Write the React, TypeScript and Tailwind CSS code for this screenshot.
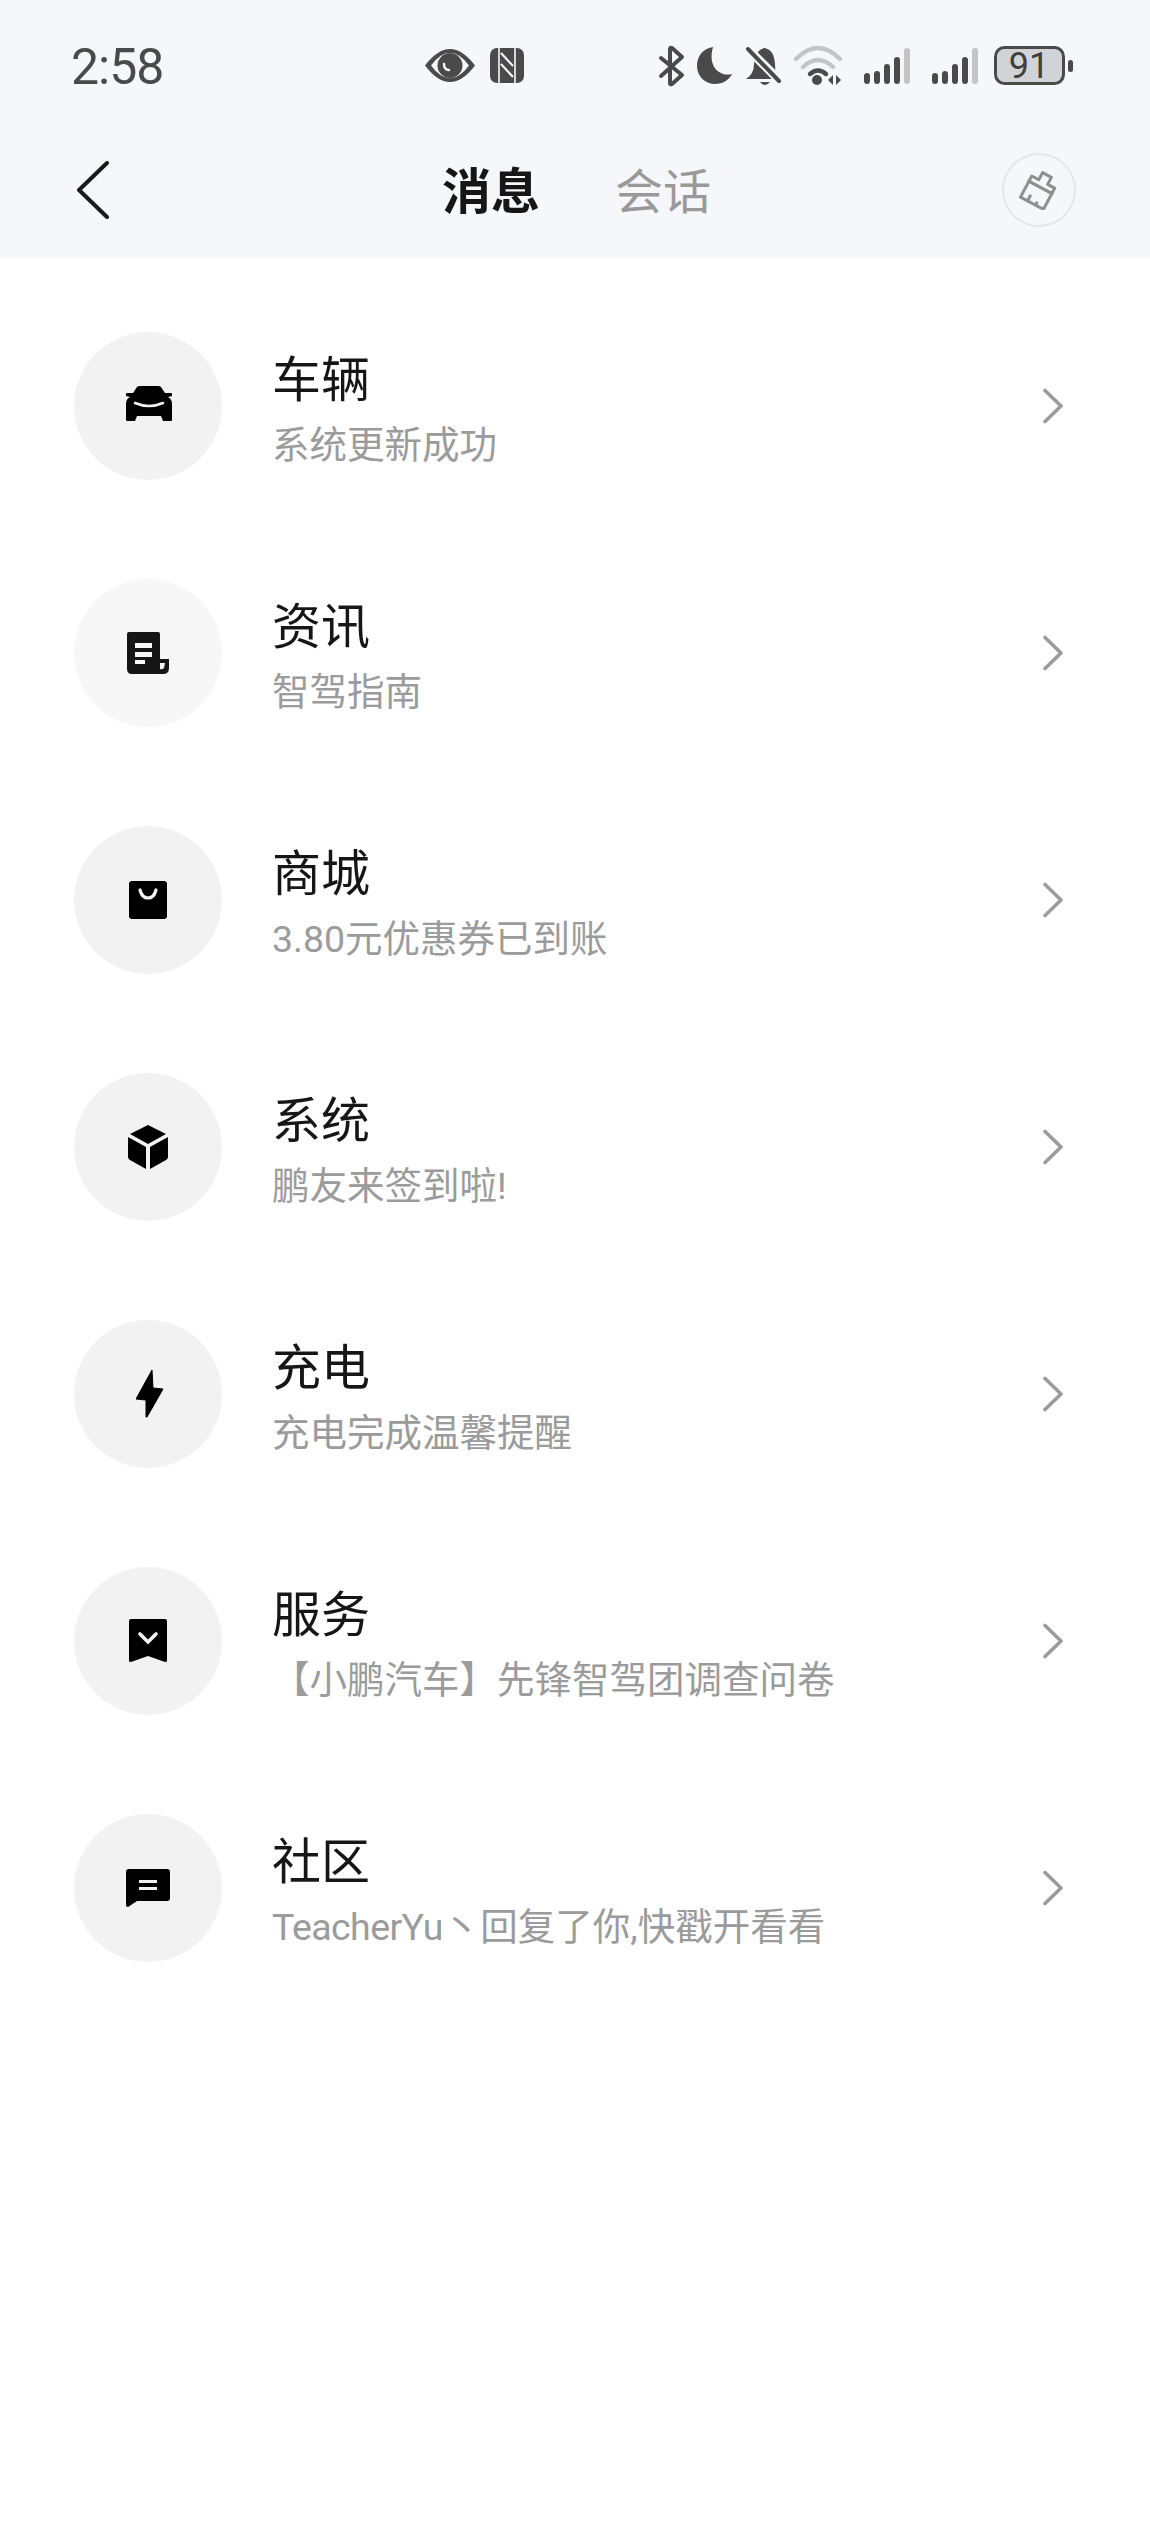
import React from "react";

const font = { fontFamily: 'Roboto, "Noto Sans CJK SC", "Noto Sans", sans-serif' };

const Chevron = () => (
  <svg width="24" height="36" viewBox="0 0 24 36" fill="none" className="shrink-0">
    <path d="M3 2.5 L19 18 L3 33.5" stroke="#9b9b9b" strokeWidth="3.6" strokeLinecap="round" strokeLinejoin="round" />
  </svg>
);

const CarIcon = () => (
  <svg width="48" height="36" viewBox="0 0 48 36" className="ml-[2px] mb-[4px]">
    <path d="M12 1 Q13 0 15 0 H33 Q35 0 36 1 L40 7 H46 Q47 7 47 8 L47 10 L43 11 Q47 13 47 18 V34 Q47 35 46 35 H38 L36 30 H12 L10 35 H2 Q1 35 1 34 V18 Q1 13 5 11 L1 10 L1 8 Q1 7 2 7 H8 Z" fill="#000" />
    <path d="M10 17 Q24 23 38 17" fill="none" stroke="#f2f2f2" strokeWidth="2.6" strokeLinecap="round" />
  </svg>
);
const DocIcon = () => (
  <svg width="44" height="42" viewBox="0 0 44 42">
    <path fillRule="evenodd" d="M3 0 H32 Q34 0 34 2 V27 H43 V36 Q43 42 37 42 H6 Q1 42 1 37 V2 Q1 0 3 0 Z M9 11 V16 H26 V11 Z M9 20 V25 H26 V20 Z M9 28 V32 H19 V28 Z M34 31 V37 Q36 38 38 36 L39 31 Z" fill="#161616" />
  </svg>
);
const BagIcon = () => (
  <svg width="38" height="38" viewBox="0 0 38 38">
    <rect width="38" height="38" rx="3" fill="#000" />
    <path d="M11 9 Q13 17 19 17 Q25 17 27 9" fill="none" stroke="#f2f2f2" strokeWidth="3.2" strokeLinecap="round" />
  </svg>
);
const CubeIcon = () => (
  <svg width="42" height="44" viewBox="0 0 42 44">
    <path d="M21 0 L39 9 L21 19 L3 9 Z M1 12 L19 22 V44 L3 35 Q1 34 1 32 Z M41 12 L23 22 V44 L39 35 Q41 34 41 32 Z" fill="#000" strokeLinejoin="round" />
  </svg>
);
const BoltIcon = () => (
  <svg width="28" height="48" viewBox="0 0 28 48" className="ml-[3px]">
    <path d="M16 0 L17 18 L27 19 L11 47 L10 47 L10 30 L0 29 Z" fill="#000" stroke="#000" strokeLinejoin="round" />
  </svg>
);
const BookmarkIcon = () => (
  <svg width="38" height="44" viewBox="0 0 38 44">
    <path d="M2 0 H36 Q38 0 38 2 V42 Q38 43 36 43 L19 37 L2 43 Q0 43 0 42 V2 Q0 0 2 0 Z" fill="#000" />
    <path d="M11 15 L19 23 L27 15" fill="none" stroke="#f2f2f2" strokeWidth="3.6" strokeLinecap="round" />
  </svg>
);
const ChatIcon = () => (
  <svg width="44" height="38" viewBox="0 0 44 38">
    <path fillRule="evenodd" d="M3 0 H41 Q44 0 44 3 V29 Q44 32 41 32 H11 L2 38 Q0 38 0 36 V3 Q0 0 3 0 Z M13 11 V14 H31 V11 Z M13 18 V21 H31 V18 Z" fill="#000" />
  </svg>
);

const rows = [
  { title: "车辆", sub: "系统更新成功", icon: <CarIcon />, bg: "bg-[#f2f2f2]" },
  { title: "资讯", sub: "智驾指南", icon: <DocIcon />, bg: "bg-[#f7f7f7]" },
  { title: "商城", sub: "3.80元优惠券已到账", icon: <BagIcon />, bg: "bg-[#f2f2f2]" },
  { title: "系统", sub: "鹏友来签到啦!", icon: <CubeIcon />, bg: "bg-[#f2f2f2]" },
  { title: "充电", sub: "充电完成温馨提醒", icon: <BoltIcon />, bg: "bg-[#f2f2f2]" },
  { title: "服务", sub: "【小鹏汽车】先锋智驾团调查问卷", icon: <BookmarkIcon />, bg: "bg-[#f2f2f2]" },
  {
    title: "社区",
    sub: (
      <>
        <span className="tracking-[-0.6px]">TeacherYu</span>丶回复了你,快戳开看看
      </>
    ),
    icon: <ChatIcon />,
    bg: "bg-[#f2f2f2]",
  },
];

const D = "#4a4a4a";
const B = "#f5f7fb";
const G = "#c4c4c6";

const Bars = ({ x }: { x: number }) => (
  <g>
    <rect x={x} y="29" width="6" height="11" rx="3" fill={D} />
    <rect x={x + 10} y="27" width="6" height="13" rx="3" fill={D} />
    <rect x={x + 20} y="20" width="6" height="20" rx="3" fill={D} />
    <rect x={x + 30} y="13" width="6" height="27" rx="3" fill={D} />
    <rect x={x + 40} y="4" width="6" height="36" rx="3" fill={G} />
  </g>
);

const StatusIcons = () => (
  <svg width="650" height="44" viewBox="0 0 650 44" className="shrink-0">
    {/* eye */}
    <path fillRule="evenodd" d="M0 21.5 Q25 -11.5 50 21.5 Q25 54.5 0 21.5 Z M6 21.5 Q25 -4 44 21.5 Q25 47 6 21.5 Z" fill={D} />
    <circle cx="25" cy="21.5" r="12.5" fill={D} />
    <path d="M19 20 Q19 26 24 26" fill="none" stroke={B} strokeWidth="2.4" strokeLinecap="round" />
    {/* NFC */}
    <rect x="65" y="4" width="34" height="35" rx="7" fill={D} />
    <path d="M74 4 V39 M90 4 V39" stroke={B} strokeWidth="1.6" />
    <path d="M76 9 L88 22 M76 20 L88 33" stroke={B} strokeWidth="2.2" />
    {/* bluetooth */}
    <path d="M236 14 L257 31 L247 40 Q245 41 245 39 V5 Q245 3 247 4 L257 13 L236 32" fill="none" stroke={D} strokeWidth="4" strokeLinecap="round" strokeLinejoin="round" />
    {/* moon */}
    <path d="M288 3 C276 5 272 14 272 22 C272 33 281 40 290 40 C298 40 304 36 307 30 C296 33 282 24 288 3 Z" fill={D} />
    {/* bell off */}
    <path d="M321 35 Q329 30 329 20 Q329 7 339 4 Q349 5 350 20 Q350 30 354 35 Z" fill={D} />
    <path d="M335 38 H345 Q340 44 335 38 Z" fill={D} />
    <path d="M321 3 L354 36" stroke={B} strokeWidth="9" />
    <path d="M323 5 L354 37" stroke={D} strokeWidth="4" strokeLinecap="round" />
    {/* wifi */}
    <path d="M371 15 Q393 -7 415 15" fill="none" stroke={G} strokeWidth="4.4" strokeLinecap="round" />
    <path d="M378 23 Q393 9 408 23" fill="none" stroke={G} strokeWidth="4.4" strokeLinecap="round" />
    <path d="M385 30 Q393 23 401 30" fill="none" stroke={D} strokeWidth="4.4" strokeLinecap="round" />
    <circle cx="392" cy="36" r="5" fill={D} />
    <path d="M408 31 L403 36 L408 41 Z M411 31 V41 L416 36 Z" fill={D} />
    <Bars x={439} />
    <Bars x={507} />
    {/* battery */}
    <rect x="570.5" y="3.5" width="68" height="36" rx="9" fill="#d2d3d7" stroke={D} strokeWidth="3" />
    <rect x="643" y="16" width="5" height="12" rx="2.5" fill={D} />
  </svg>
);

export default function App() {
  return (
    <div className="w-[1150px] h-[2527px] bg-white flex flex-col" style={font}>
      <div className="h-[258px] bg-[#f5f7fb] flex flex-col shrink-0">
        <div className="h-[132px] pl-[71px] flex items-start pt-[44px] relative">
          <span className="text-[50px] leading-[46px] tracking-[-1px] text-[#4a4a4a] w-[354px] shrink-0">2:58</span>
          <StatusIcons />
          <span className="absolute left-[999px] top-[50px] w-[60px] text-center text-[36px] leading-[32px] text-[#3f3f3f]">91</span>
        </div>
        <div className="flex-1 relative flex items-start">
          <div className="pl-[74px] pt-[29px] w-[442px] shrink-0">
            <svg width="36" height="58" viewBox="0 0 36 58" fill="none">
              <path d="M33 2 L5 29 L33 56" stroke="#1a1a1a" strokeWidth="4" strokeLinecap="round" strokeLinejoin="round" />
            </svg>
          </div>
          <span className="text-[49px] leading-[64px] font-bold text-[#161616] w-[173px] shrink-0 mt-[29px]">消息</span>
          <span className="text-[48px] leading-[64px] text-[#999999] mt-[29px]">会话</span>
          <div className="absolute left-[1002px] top-[21px] w-[74px] h-[74px] rounded-full border-2 border-[#e6e6ea] flex items-center justify-center">
            <svg width="40" height="40" viewBox="0 0 40 40" fill="none">
              <g transform="rotate(28 20 20)" stroke="#8f8f8f" strokeWidth="3" strokeLinejoin="round">
                <path d="M15 3 H25 V11 H33 V17 H7 V11 H15 Z" />
                <path d="M7 17 H33 V35 H7 Z" />
                <path d="M15 35 V28 M24 35 V31" />
              </g>
            </svg>
          </div>
        </div>
      </div>
      <div className="flex flex-col pt-[74px]">
        {rows.map((r) => (
          <div key={r.title} className="h-[247px] flex items-start pl-[74px] pr-[84px]">
            <div className={`w-[148px] h-[148px] rounded-full ${r.bg} flex items-center justify-center shrink-0`}>{r.icon}</div>
            <div className="ml-[50px] flex-1 min-w-0 pt-[15px]">
              <div className="text-[49px] leading-[68px] text-[#161616]">{r.title}</div>
              <div className="text-[37.5px] leading-[52px] text-[#9b9b9b] mt-[4px] whitespace-nowrap">{r.sub}</div>
            </div>
            <div className="mt-[56px]">
              <Chevron />
            </div>
          </div>
        ))}
      </div>
    </div>
  );
}
